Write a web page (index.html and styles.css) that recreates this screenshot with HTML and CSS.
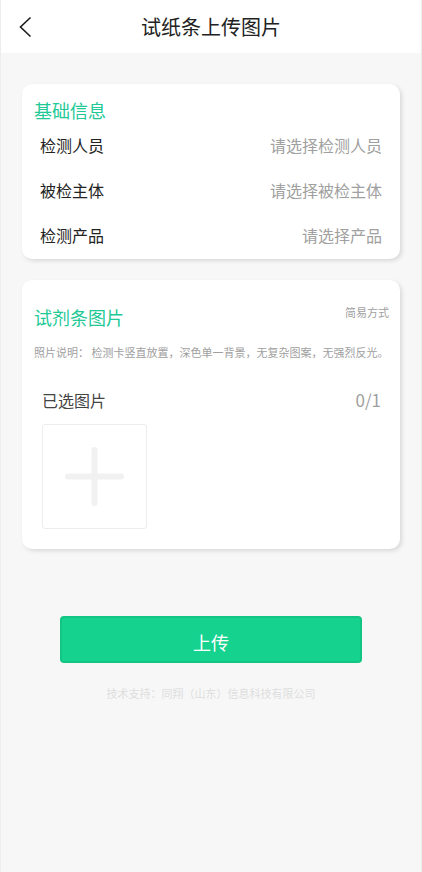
FILE: index.html
```html
<!DOCTYPE html>
<html lang="zh-CN">
<head>
    <meta charset="UTF-8">
    <meta name="viewport" content="width=device-width, initial-scale=1">
    <title>试纸条上传图片</title>
    <link rel="stylesheet" href="styles.css">
</head>
<body>
    <header class="navbar">
        <button type="button" class="back" aria-label="返回">
            <svg width="14" height="22" viewBox="0 0 14 22" fill="none" stroke="#1c1c1c" stroke-width="1.6">
                <path d="M12.5 1.5 L2.5 11 L12.5 20.5"/>
            </svg>
        </button>
        <h1 class="navbar-title">试纸条上传图片</h1>
    </header>
    <main class="content">
        <section class="card">
            <h2 class="card-title">基础信息</h2>
            <div class="row">
                <label for="person">检测人员</label>
                <select id="person" class="picker">
                    <option value="">请选择检测人员</option>
                </select>
            </div>
            <div class="row">
                <label for="subject">被检主体</label>
                <select id="subject" class="picker">
                    <option value="">请选择被检主体</option>
                </select>
            </div>
            <div class="row">
                <label for="product">检测产品</label>
                <select id="product" class="picker">
                    <option value="">请选择产品</option>
                </select>
            </div>
        </section>
        <section class="card card-photo">
            <div class="card-head">
                <h2 class="card-title">试剂条图片</h2>
                <button type="button" class="mode">简易方式</button>
            </div>
            <p class="note">照片说明： 检测卡竖直放置，深色单一背景，无复杂图案，无强烈反光。</p>
            <div class="photos">
                <div class="photos-head">
                    <span>已选图片</span>
                    <span class="count">0/1</span>
                </div>
                <button type="button" class="add" aria-label="添加图片">
                    <svg width="59" height="59" viewBox="0 0 59 59" stroke="#f1f1f1" stroke-width="6" stroke-linecap="round">
                        <path d="M29.5 3 V56 M3 29.5 H56"/>
                    </svg>
                </button>
            </div>
        </section>
        <button type="button" class="submit">上传</button>
    </main>
    <footer class="support">技术支持：同翔（山东）信息科技有限公司</footer>
</body>
</html>
```
FILE: styles.css
```css
* {
    box-sizing: border-box;
}

body {
    margin: 0;
    min-height: 100vh;
    border: solid #ededed;
    border-width: 0 1px;
    background-color: #f7f7f7;
    color: #222;
    font-family: "Noto Sans CJK SC", sans-serif;
    font-size: 16px;
}

button, select {
    margin: 0;
    padding: 0;
    border: none;
    background: none;
    font-family: inherit;
    cursor: pointer;
}

h1, h2, p {
    margin: 0;
    font-weight: 400;
}

svg {
    display: block;
}

/* top bar */
.navbar {
    display: grid;
    grid-template-columns: 48px 1fr 48px;
    align-items: center;
    height: 53px;
    background-color: #fff;
}

.back {
    padding: 8px 17px;
}

.navbar-title {
    font-size: 20px;
    line-height: 30px;
    text-align: center;
}

/* cards */
.content {
    display: flex;
    flex-direction: column;
    gap: 21px;
    padding: 31px 21px 0;
}

.card {
    padding: 13px 12px 1px;
    border-radius: 10px;
    background-color: #fff;
    box-shadow: 2px 2px 4px rgba(0, 0, 0, 0.12);
}

.card-title {
    color: #22c996;
    font-size: 18px;
    line-height: 26px;
}

.row {
    display: flex;
    justify-content: space-between;
    align-items: center;
    height: 45px;
    padding: 0 6px 2px;
}

.picker {
    appearance: none;
    color: #a0a0a0;
    font-size: 16px;
    line-height: 24px;
    text-align: right;
    text-align-last: right;
}

.card-photo {
    padding: 24px 11px 20px 12px;
}

.card-head {
    display: flex;
    justify-content: space-between;
    align-items: flex-start;
}

.mode, .note, .support {
    font-size: 11px;
    line-height: 16px;
}

.mode, .note {
    color: #a0a0a0;
}

.note {
    margin-top: 14px;
}

.photos {
    padding: 28px 8px 0;
}

.photos-head {
    display: flex;
    justify-content: space-between;
    margin-bottom: 12px;
    color: #444;
    line-height: 24px;
}

.count {
    color: #a0a0a0;
    font-size: 17px;
}

.add {
    display: flex;
    justify-content: center;
    align-items: center;
    width: 105px;
    height: 105px;
    border: 1px solid #ededed;
    border-radius: 3px;
}

.submit {
    height: 47px;
    margin: 46px 38px 0;
    padding-top: 4px;
    border: 2px solid #12c583;
    border-radius: 4px;
    background-color: #15d28f;
    color: #fff;
    font-size: 18px;
}

.support {
    padding: 22px 0;
    color: #dedede;
    text-align: center;
}
```
